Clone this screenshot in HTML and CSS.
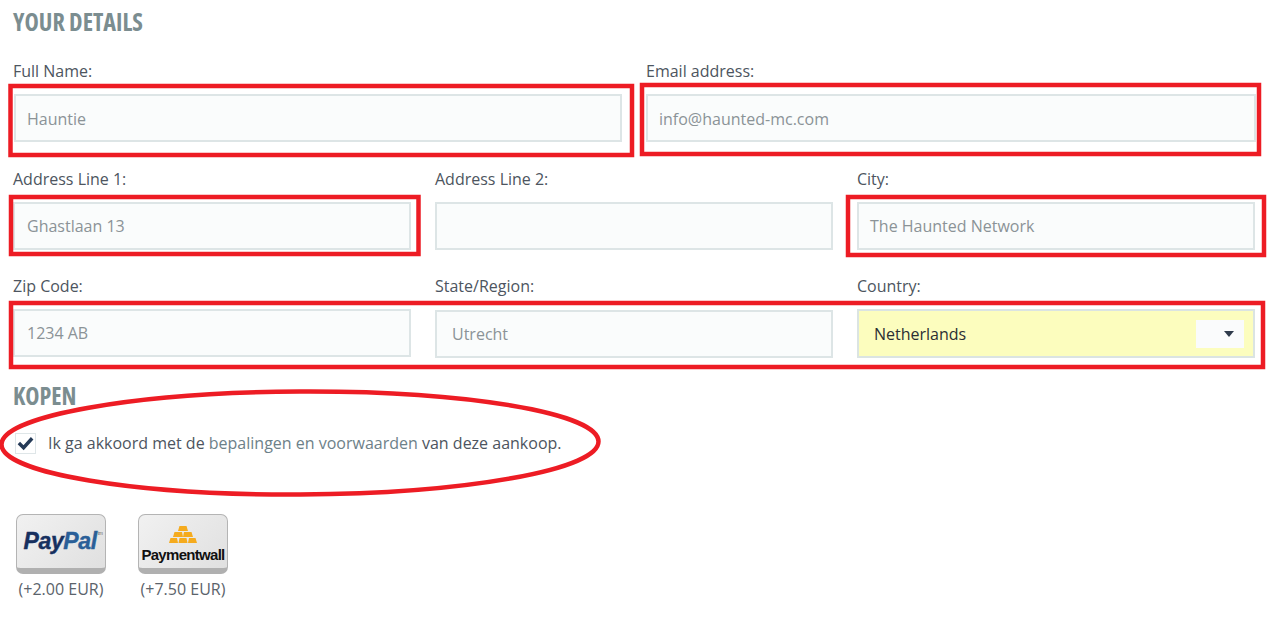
FILE: index.html
```html
<!DOCTYPE html>
<html lang="en">
<head>
<meta charset="utf-8">
<title>Your details</title>
<link rel="stylesheet" href="styles.css">
</head>
<body>
<main class="page">
  <h2 class="heading">YOUR DETAILS</h2>
  <div class="row row-two">
    <div class="field"><label>Full Name:</label><div class="input">Hauntie</div></div>
    <div class="field"><label>Email address:</label><div class="input">info@haunted-mc.com</div></div>
  </div>
  <div class="row row-three">
    <div class="field"><label>Address Line 1:</label><div class="input">Ghastlaan 13</div></div>
    <div class="field"><label>Address Line 2:</label><div class="input"></div></div>
    <div class="field"><label>City:</label><div class="input input-city">The Haunted Network</div></div>
  </div>
  <div class="row row-three">
    <div class="field"><label>Zip Code:</label><div class="input">1234 AB</div></div>
    <div class="field"><label>State/Region:</label><div class="input input-indent">Utrecht</div></div>
    <div class="field"><label>Country:</label>
      <div class="input select">Netherlands
        <span class="select-arrow"><svg width="10" height="6" viewBox="0 0 10 6"><path d="M0 0h10L5 6z" fill="#2f3b4c"/></svg></span>
      </div>
    </div>
  </div>
  <h2 class="heading heading-buy">KOPEN</h2>
  <div class="agree">
    <span class="checkbox"><svg width="20" height="16" viewBox="0 0 20 16"><path d="M3 8l5 5 9-10" fill="none" stroke="#253a57" stroke-width="3.6"/></svg></span>
    <span>Ik ga akkoord met de <a class="link">bepalingen en voorwaarden</a> van deze aankoop.</span>
  </div>
  <div class="payments">
    <div class="pay">
      <div class="pay-button"><span class="paypal"><b>Pay</b><i>Pal</i><sup class="tm">tm</sup></span></div>
      <div class="pay-fee">(+2.00 EUR)</div>
    </div>
    <div class="pay">
      <div class="pay-button pay-button-wall">
        <svg class="bars" width="28" height="17" viewBox="0 0 28 17"><path fill="#f5ab1e" d="M10.500 0h7l1.500 5H9zM5.500 6h7.500l1 5H4zM15 6h7.500L24 11h-10zM1.500 12H8l1 5H0zM10.500 12h7l1 5H9.500zM20 12h6.500L28 17H19z"/></svg>
        <span class="wall">Paymentwall</span>
      </div>
      <div class="pay-fee">(+7.50 EUR)</div>
    </div>
  </div>
</main>
<svg class="marks" width="1278" height="630" viewBox="0 0 1278 630" aria-hidden="true">
  <g fill="none" stroke="#ed1c24" stroke-width="4.500">
    <rect x="10.500" y="86" width="621.500" height="69"/>
    <rect x="642" y="85" width="617" height="69"/>
    <rect x="11" y="197" width="407.500" height="57"/>
    <rect x="848" y="197" width="416" height="58"/>
    <rect x="11" y="303" width="1252" height="64"/>
    <ellipse cx="300" cy="443" rx="298.500" ry="51.500" transform="rotate(-0.300 300 443)"/>
  </g>
</svg>
</body>
</html>
```
FILE: styles.css
```css
* { box-sizing: border-box; }
html, body { margin: 0; height: 100%; background: #fff; overflow: hidden; }
body { font-family: "Open Sans", sans-serif; font-size: 16px; color: #4d5560; position: relative; }
.page { padding: 8px 23px 0 13px; width: 1278px; }
.heading { margin: 0; height: 27px; line-height: 27px; font-family: "Open Sans", sans-serif; font-size: 24.200px; font-weight: 700; font-stretch: 75%; color: #7b8d90; }
.row { display: grid; margin-bottom: 24px; }
.row-two { grid-template-columns: 609px 610px; column-gap: 24px; margin-top: 24px; margin-bottom: 25px; }
.row-three { grid-template-columns: 398px 398px 398px; column-gap: 24px; }
.field label { display: block; height: 35px; line-height: 24px; font-size: 16px; }
.field { min-width: 0; }
.input { height: 48px; border: 2px solid #dde5e6; background: #fafcfc; color: #8b9397; font-size: 16px; line-height: 45px; padding-left: 12px; }
.input-indent { padding-left: 15px; margin-top: 1px; }
.input-city { padding-left: 11px; }
.row-two .input { padding-left: 11px; line-height: 47px; }
.row-two .field:first-child .input { margin-left: 1px; width: 608px; }
.select { height: 49px; background: #fcfdbe; color: #2b2f33; padding-left: 15px; position: relative; border-color: #dbe4e2; margin-top: 0; line-height: 47px; }
.select-arrow { position: absolute; right: 9px; top: 9px; width: 48px; height: 28px; background: #fafbfc; display: flex; align-items: center; justify-content: center; padding-left: 18px; }
.heading-buy { margin-top: 1px; font-size: 24px; }
.agree { display: flex; align-items: center; gap: 12px; margin: 19px 0 0 2px; height: 30px; font-size: 16px; }
.checkbox { width: 21px; height: 21px; border: 1px solid #dfe6e8; background: #fff; display: flex; align-items: center; justify-content: center; }
.link { color: #6d8189; }
.payments { display: flex; gap: 32px; margin: 56px 0 0 3px; }
.pay { width: 90px; display: flex; flex-direction: column; align-items: center; }
.pay-button { width: 90px; height: 60px; border-radius: 7px; border: 1px solid #b4b4b4; border-bottom: 6px solid #b0b0b0; background: linear-gradient(135deg, #f1f1f1, #e0e0e0); display: flex; align-items: center; justify-content: center; }
.pay-button-wall { flex-direction: column; gap: 4px; padding-top: 5px; }
.paypal { font-family: "Liberation Sans", sans-serif; font-size: 23px; font-weight: 700; font-style: italic; letter-spacing: -0.4px; -webkit-text-stroke: 0.4px currentColor; margin-left: 4px; }
.paypal b { color: #17305f; }
.paypal i { color: #2a5f98; }
.tm { font-size: 5px; font-style: normal; font-weight: 400; color: #666; -webkit-text-stroke: 0; vertical-align: 14px; line-height: 0; margin-left: 1px; }
.wall { font-family: "Liberation Sans", sans-serif; font-size: 15px; font-weight: 700; letter-spacing: -0.7px; color: #111; line-height: 15px; }
.pay-fee { margin-top: 5px; font-size: 16px; line-height: 20px; color: #5b636b; white-space: nowrap; }
.marks { position: absolute; left: 0; top: 0; pointer-events: none; }
```
